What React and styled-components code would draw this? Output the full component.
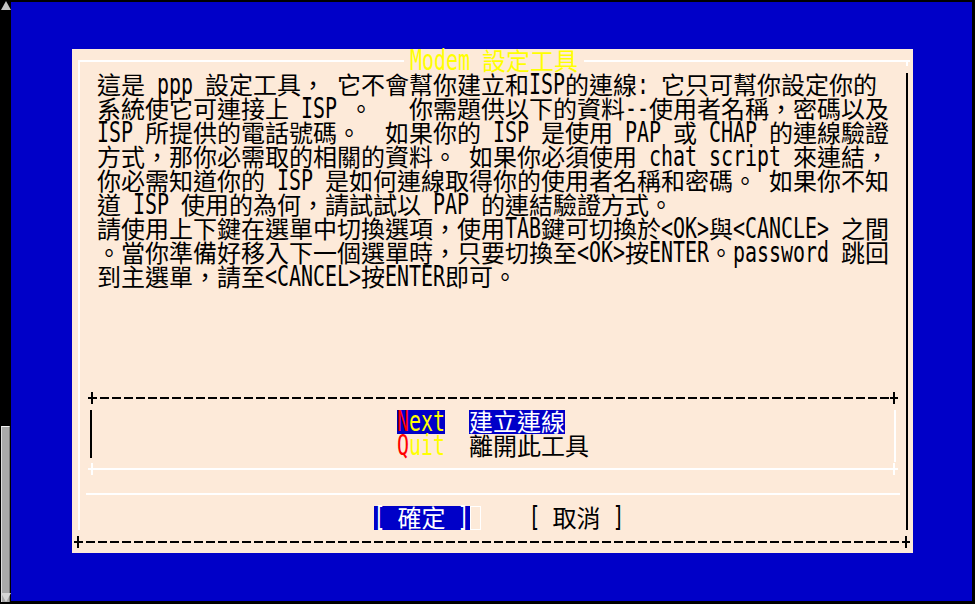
import React from "react";
import styled, { createGlobalStyle, css } from "styled-components";

const BLUE = "#0000c8";
const BEIGE = "#fdead9";
const YELLOW = "#ffff00";
const RED = "#ff0000";

const Global = createGlobalStyle`
  html, body { margin: 0; padding: 0; background: #000; }
  body { width: 975px; height: 604px; overflow: hidden; }
`;

const CJK_SPLIT = /([\u2E80-\u9FFF\uF900-\uFAFF\uFE30-\uFE4F\uFF00-\uFFEF]+)/;
const CJK_TEST = /^[\u2E80-\u9FFF\uF900-\uFAFF\uFE30-\uFE4F\uFF00-\uFFEF]/;

const cell = css`
  height: 24px;
  padding-top: 3px;
  box-sizing: border-box;
  line-height: 24px;
  white-space: pre;
  font-family: "DejaVu Sans Mono", monospace;
  font-size: 19.93px;
`;

const Han = styled.span`
  font-family: "Noto Sans CJK TC", "Noto Sans CJK SC", sans-serif;
  font-size: 24px;
  line-height: 0;
  color: ${(p) => p.$color || "inherit"};
`;

const Lat = styled.span`
  display: inline-block;
  font-family: "DejaVu Sans Mono", monospace;
  font-size: 19.93px;
  line-height: 16px;
  height: 16px;
  white-space: pre;
  transform: scaleY(1.38);
  transform-origin: 50% 14.9px;
  color: ${(p) => p.$color || "inherit"};
`;

function Txt({ text, color }) {
  return text
    .split(CJK_SPLIT)
    .filter(Boolean)
    .map((s, i) =>
      CJK_TEST.test(s) ? (
        <Han key={i} $color={color}>{s}</Han>
      ) : (
        <Lat key={i} $color={color}>{s}</Lat>
      )
    );
}

/* ---------- screen ---------- */
const Screen = styled.div`
  display: flex;
  width: 975px;
  height: 604px;
  background: #000;
`;

const Scrollbar = styled.div`
  width: 11px;
  display: flex;
  flex-direction: column;
  align-items: center;
  padding: 1px 0 2px;
  box-sizing: border-box;
  background: #000;
`;

const UpArrow = styled.span`
  width: 0;
  height: 0;
  border-left: 5px solid transparent;
  border-right: 5px solid transparent;
  border-bottom: 9px solid #c4c4c4;
`;

const Thumb = styled.div`
  margin-top: auto;
  width: 9px;
  height: 176px;
  box-sizing: border-box;
  background: #a9a9a9;
  border-top: 1px solid #f4f4f4;
  border-left: 1px solid #dcdcdc;
  border-right: 1px solid #7a7a7a;
  display: flex;
  flex-direction: column;
  justify-content: flex-end;
  align-items: center;
`;

const DownArrow = styled.span`
  width: 0;
  height: 0;
  border-left: 5px solid transparent;
  border-right: 5px solid transparent;
  border-top: 9px solid #d6d6d6;
`;

const Desktop = styled.main`
  flex: 1;
  background: ${BLUE};
  border-top: 2px solid #000;
  border-right: 3px solid #000;
  border-bottom: 3px solid #000;
  padding: 47px 0 0 61px;
  box-sizing: border-box;
`;

/* ---------- dialog ---------- */
const Dialog = styled.section`
  width: 841px;
  height: 504px;
  box-sizing: border-box;
  background: ${BEIGE};
  padding: 11px 3px 5px 2px;
  display: flex;
  flex-direction: column;
  color: #000;
`;

const Frame = styled.div`
  flex: 1;
  margin: 0 0 0 4px;
  padding-right: 4px;
  position: relative;
  display: flex;
  flex-direction: column;
  border-top: 2px solid #fff;
  background:
    linear-gradient(#fff, #fff) left top / 2px calc(100% - 6px) no-repeat,
    linear-gradient(#000, #000) right 2px top 11px / 2px calc(100% - 17px) no-repeat,
    linear-gradient(#fff, #fff) right 2px top -4px / 2px 8px no-repeat;
  padding-left: 2px;
`;

const Title = styled.h1`
  ${cell};
  position: absolute;
  top: -13px;
  left: 50%;
  transform: translateX(-50%);
  margin: 0;
  padding-left: 6px;
  padding-right: 6px;
  font-weight: normal;
  background: ${BEIGE};
  color: ${YELLOW};
`;

const Body = styled.div`
  padding: 11px 0 0 17px;
`;

const Line = styled.div`
  ${cell};
`;

const Spacer = styled.div`
  flex: 1;
`;

const Rule = styled.div`
  display: flex;
  justify-content: space-between;
  align-items: center;
  height: 12px;
  background-image: ${(p) =>
    p.$dashed
      ? `linear-gradient(to right, ${p.$color} 9px, transparent 9px)`
      : `linear-gradient(${p.$color}, ${p.$color})`};
  background-size: ${(p) => (p.$dashed ? "12px 2px" : "100% 2px")};
  background-repeat: ${(p) => (p.$dashed ? "repeat-x" : "no-repeat")};
  background-position: left center;
`;

const Cross = styled.span`
  width: 8px;
  height: 12px;
  background:
    linear-gradient(${(p) => p.$color}, ${(p) => p.$color}) center / 2px 100% no-repeat,
    linear-gradient(${(p) => p.$color}, ${(p) => p.$color}) center / 100% 2px no-repeat;
`;

const MenuBox = styled.div`
  margin: 0 8px;
`;

const MenuBody = styled.div`
  height: 59px;
  box-sizing: border-box;
  margin: 0 2px;
  padding: 6px 2px 0;
  background:
    linear-gradient(#000, #000) left top 6px / 2px 48px no-repeat,
    linear-gradient(#fff, #fff) right top 6px / 2px 52px no-repeat;
`;

const MenuList = styled.div`
  display: grid;
  grid-template-columns: 48px auto;
  column-gap: 24px;
  justify-content: center;
`;

const MenuTag = styled.div`
  ${cell};
  justify-self: start;
  background: ${(p) => (p.$active ? BLUE : "transparent")};
`;

const MenuDesc = styled.div`
  ${cell};
  justify-self: start;
  background: ${(p) => (p.$active ? BLUE : "transparent")};
  color: ${(p) => (p.$active ? "#fff" : "#000")};
`;

const Separator = styled.div`
  height: 2px;
  margin: 18px 6px 0;
  background: #fff;
`;

const ButtonRow = styled.div`
  height: 41px;
  box-sizing: border-box;
  padding: 11px 0 0 12px;
  display: flex;
  justify-content: center;
  align-items: flex-start;
`;

const Button = styled.div`
  ${cell};
  margin-left: ${(p) => (p.$gap ? "48px" : "0")};
  background: ${(p) => (p.$active ? BLUE : "transparent")};
  color: ${(p) => (p.$active ? "#fff" : "#000")};
`;

const Cursor = styled.span`
  width: 11px;
  height: 24px;
  box-sizing: border-box;
  border: 1px solid #fff;
`;

const LINES = [
  "這是 ppp 設定工具， 它不會幫你建立和ISP的連線: 它只可幫你設定你的",
  "系統使它可連接上 ISP 。   你需題供以下的資料--使用者名稱，密碼以及",
  "ISP 所提供的電話號碼。  如果你的 ISP 是使用 PAP 或 CHAP 的連線驗證",
  "方式，那你必需取的相關的資料。 如果你必須使用 chat script 來連結，",
  "你必需知道你的 ISP 是如何連線取得你的使用者名稱和密碼。 如果你不知",
  "道 ISP 使用的為何，請試試以 PAP 的連結驗證方式。",
  "請使用上下鍵在選單中切換選項，使用TAB鍵可切換於<OK>與<CANCLE> 之間",
  "。當你準備好移入下一個選單時，只要切換至<OK>按ENTER。password 跳回",
  "到主選單，請至<CANCEL>按ENTER即可。",
];

const MENU = [
  { key: "N", rest: "ext", desc: "建立連線", active: true },
  { key: "Q", rest: "uit", desc: "離開此工具", active: false },
];

export default function App() {
  return (
    <>
      <Global />
      <Screen>
        <Scrollbar>
          <UpArrow />
          <Thumb>
            <DownArrow />
          </Thumb>
        </Scrollbar>
        <Desktop>
          <Dialog>
            <Frame>
              <Title>
                <Txt text="Modem 設定工具" />
              </Title>
              <Body>
                {LINES.map((l, i) => (
                  <Line key={i}>
                    <Txt text={l} />
                  </Line>
                ))}
              </Body>
              <Spacer />
              <MenuBox>
                <Rule $dashed $color="#000">
                  <Cross $color="#000" />
                  <Cross $color="#000" />
                </Rule>
                <MenuBody>
                  <MenuList>
                    {MENU.map((m) => (
                      <React.Fragment key={m.key}>
                        <MenuTag $active={m.active}>
                          <Lat $color={RED}>{m.key}</Lat>
                          <Lat $color={YELLOW}>{m.rest}</Lat>
                        </MenuTag>
                        <MenuDesc $active={m.active}>
                          <Txt text={m.desc} />
                        </MenuDesc>
                      </React.Fragment>
                    ))}
                  </MenuList>
                </MenuBody>
                <Rule $color="#fff">
                  <Cross $color="#fff" />
                  <Cross $color="#fff" />
                </Rule>
              </MenuBox>
              <Separator />
              <ButtonRow>
                <Button $active>
                  <Txt text="[ 確定 ]" />
                </Button>
                <Cursor />
                <Button $gap>
                  <Txt text="[ 取消 ]" />
                </Button>
              </ButtonRow>
            </Frame>
            <Rule $dashed $color="#000">
              <Cross $color="#000" />
              <Cross $color="#000" />
            </Rule>
          </Dialog>
        </Desktop>
      </Screen>
    </>
  );
}
